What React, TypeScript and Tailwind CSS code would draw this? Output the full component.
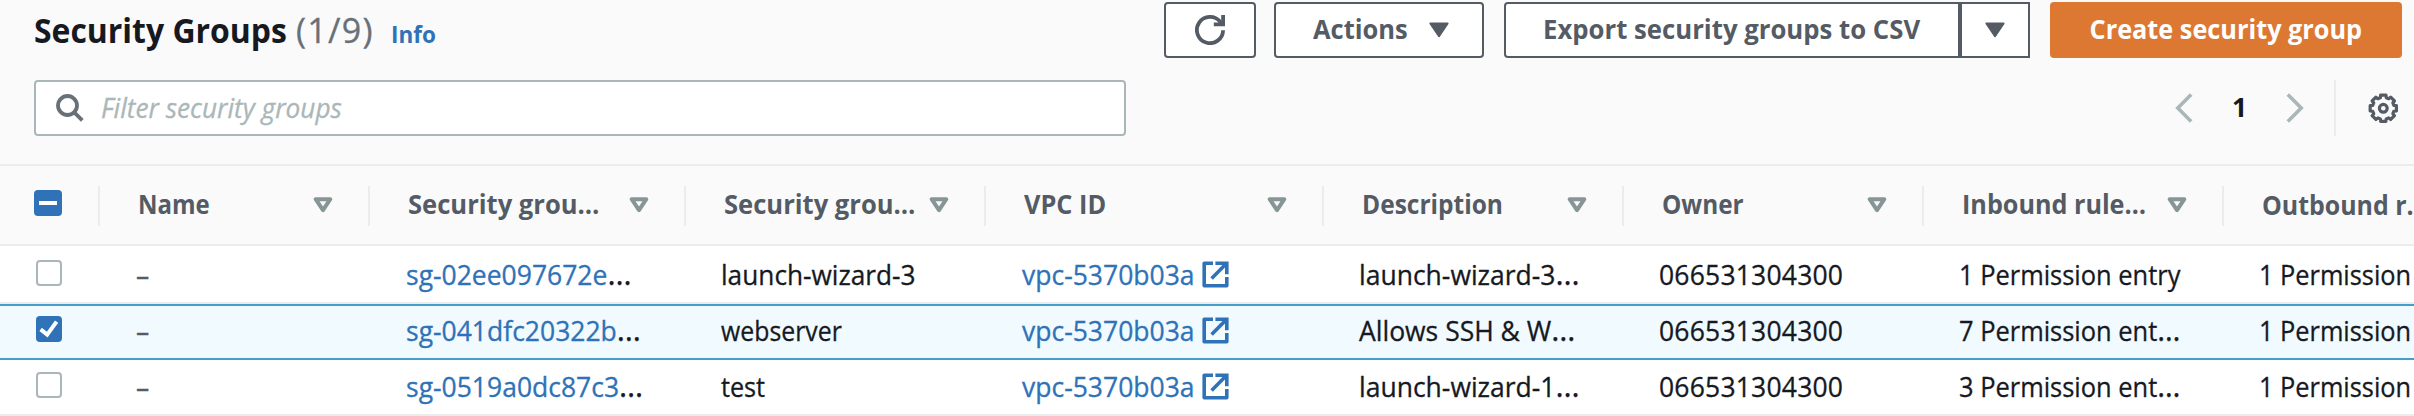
import React from "react";

type IconProps = { className?: string };

const SearchIcon = () => (
  <svg viewBox="0 0 28 28" className="size-7" fill="none" stroke="#687078" strokeWidth="3.8">
    <circle cx="11.5" cy="11.5" r="9.5" />
    <path d="M18 18.2 26.3 26.3" />
  </svg>
);

const RefreshIcon = () => (
  <svg viewBox="0 0 30 30" className="h-[30px] w-[30px]" fill="none" stroke="#545b64" strokeWidth="3.8">
    <path d="M28.1 15.2A13.1 13.1 0 1 1 25.2 6.8L27 9.2" />
    <path d="M28.1 0V9.3H18.8" />
  </svg>
);

const CaretDown = () => (
  <svg viewBox="0 0 20 16" className="h-4 w-5" fill="#545b64" stroke="#545b64" strokeWidth="2" strokeLinejoin="round">
    <path d="M1.4 1.4H18.6L10 14.2Z" />
  </svg>
);

const SortIcon = () => (
  <svg viewBox="0 0 20 16" className="h-4 w-5 shrink-0" fill="none" stroke="#879596" strokeWidth="4" strokeLinejoin="round">
    <path d="M2.7 2.2H17.3L10 13.2Z" />
  </svg>
);

const Chevron = ({ className }: IconProps) => (
  <svg viewBox="0 0 18 30" className={className} fill="none" stroke="#aab7b8" strokeWidth="3.6">
    <path d="M16.2 1.6 2.8 15 16.2 28.4" />
  </svg>
);

const GEAR_TEETH = 8;

function gearPath() {
  const points: string[] = [];
  for (let i = 0; i < GEAR_TEETH; i++) {
    const base = (i * 2 * Math.PI) / GEAR_TEETH - Math.PI / 2;
    const steps: [number, number][] = [
      [-0.2, 13.4],
      [0.2, 13.4],
      [0.27, 11],
      [0.515, 11],
    ];
    for (const [offset, radius] of steps) {
      const x = 15.3 + radius * Math.cos(base + offset);
      const y = 15.3 + radius * Math.sin(base + offset);
      points.push(`${x.toFixed(2)} ${y.toFixed(2)}`);
    }
  }
  return `M${points.join("L")}Z`;
}

const GearIcon = () => (
  <svg viewBox="0 0 31 31" className="h-[31px] w-[31px]" fill="none" stroke="#545b64" strokeWidth="3.2" strokeLinejoin="round">
    <path d={gearPath()} />
    <circle cx="15.3" cy="15.3" r="3.9" />
  </svg>
);

const ExternalIcon = () => (
  <svg viewBox="0 0 27 27" className="h-[27px] w-[27px]" fill="none" stroke="#2f72b7" strokeWidth="3.6" strokeLinejoin="round">
    <path d="M11 2.2H2.2V24.8H24.8V16" />
    <path d="M13.4 2.2H24.8V13.2" strokeLinejoin="miter" />
    <path d="M9.6 17.4 24.4 2.6" />
  </svg>
);

const COLUMNS =
  "grid w-full grid-cols-[100px_270px_316px_300px_338px_300px_300px_300px_190px]";

const HEADERS = [
  { label: "Name", cls: "scale-x-[0.905]" },
  { label: "Security grou…", cls: "scale-x-[0.965]" },
  { label: "Security grou…", cls: "scale-x-[0.965]" },
  { label: "VPC ID", cls: "scale-x-[0.955]" },
  { label: "Description", cls: "scale-x-[0.925]" },
  { label: "Owner", cls: "scale-x-[0.918]" },
  { label: "Inbound rule…", cls: "scale-x-[0.95]" },
];

type Row = {
  id: string;
  name: string;
  nameCls: string;
  description: string;
  inbound: string;
  inboundCut: boolean;
  selected: boolean;
  box: string;
};

const ROWS: Row[] = [
  {
    id: "sg-02ee097672e",
    name: "launch-wizard-3",
    nameCls: "scale-x-[0.99]",
    description: "launch-wizard-3",
    inbound: "1 Permission entry",
    inboundCut: false,
    selected: false,
    box: "h-[58px] border-b-2 border-[#eaeded] bg-white pt-2",
  },
  {
    id: "sg-041dfc20322b",
    name: "webserver",
    nameCls: "scale-x-[0.937]",
    description: "Allows SSH & W",
    inbound: "7 Permission ent",
    inboundCut: true,
    selected: true,
    box: "h-14 border-y-2 border-[#44a0c8] bg-[#f1faff] pt-1",
  },
  {
    id: "sg-0519a0dc87c3",
    name: "test",
    nameCls: "scale-x-[0.95]",
    description: "launch-wizard-1",
    inbound: "3 Permission ent",
    inboundCut: true,
    selected: false,
    box: "h-14 border-b-2 border-[#eaeded] bg-white pt-1.5",
  },
];

const Dots = () => <span className="text-[31px] leading-none text-[#16191f]">…</span>;

const Checkbox = ({ checked }: { checked: boolean }) =>
  checked ? (
    <span className="mt-1.5 ml-9 flex size-[26px] items-center justify-center rounded-[4px] bg-[#2f72b7]">
      <svg viewBox="0 0 26 26" className="size-[26px]" fill="none" stroke="#fff" strokeWidth="4">
        <path d="M4.6 13.4 11.2 18.6 20.6 5.6" />
      </svg>
    </span>
  ) : (
    <span className="mt-1.5 ml-9 block size-[26px] rounded-[4px] border-2 border-[#aab7b8] bg-white" />
  );

const TableRow = ({ row }: { row: Row }) => (
  <div className={`${COLUMNS} ${row.box} text-[26.5px] leading-[42px] whitespace-nowrap [-webkit-text-stroke:0.3px]`}>
    <div>
      <Checkbox checked={row.selected} />
    </div>
    <div className="pl-9 text-[#545b64]">–</div>
    <div className="pl-9">
      <span className="text-[#2f72b7]">{row.id}</span>
      <Dots />
    </div>
    <div className="pl-[35px]">
      <span className={`inline-block origin-left ${row.nameCls}`}>{row.name}</span>
    </div>
    <div className="flex gap-[7px] pl-9 text-[#2f72b7]">
      <span>vpc-5370b03a</span>
      <span className="pt-[7px]">
        <ExternalIcon />
      </span>
    </div>
    <div className="pl-[35px]">
      {row.description}
      <Dots />
    </div>
    <div className="pl-[35px] tracking-[0.2px]">066531304300</div>
    <div className="pl-[35px]">
      <span className="inline-block origin-left scale-x-[0.96]">
        {row.inbound}
        {row.inboundCut && <Dots />}
      </span>
    </div>
    <div className="pl-[35px]">
      <span className="inline-block origin-left scale-x-[0.956]">1 Permission</span>
    </div>
  </div>
);

const BUTTON = "flex h-14 items-center border-2 border-[#545b64] bg-white text-[#545b64]";

export default function App() {
  return (
    <div className="flex h-[416px] w-full flex-col overflow-hidden bg-[#fafafa] font-['Open_Sans',sans-serif] text-[#16191f]">
      <header className="flex h-[80px] items-start justify-between pt-0.5 pr-3 pl-[34px]">
        <div className="flex items-baseline leading-14 whitespace-nowrap">
          <h1 className="w-[262px] origin-left scale-x-[0.953] text-[33.5px] font-bold">Security Groups</h1>
          <span className="w-[95px] text-[34px] tracking-[1.3px] text-[#687078] [-webkit-text-stroke:0.3px]">(1/9)</span>
          <a className="text-[22.5px] font-bold text-[#2f72b7]">Info</a>
        </div>
        <div className="flex text-[26.5px] font-bold whitespace-nowrap">
          <button className={`${BUTTON} w-[92px] justify-center rounded-[4px]`}>
            <RefreshIcon />
          </button>
          <button className={`${BUTTON} ml-[18px] w-[210px] justify-between rounded-[4px] pr-[33px] pl-[37px]`}>
            <span className="origin-left scale-x-[0.962]">Actions</span>
            <CaretDown />
          </button>
          <button className={`${BUTTON} ml-5 w-[456px] rounded-l-[4px] pl-[37px]`}>
            <span className="origin-left scale-x-[0.971]">Export security groups to CSV</span>
          </button>
          <button className={`${BUTTON} w-[70px] justify-center`}>
            <CaretDown />
          </button>
          <button className="ml-5 flex h-14 w-[352px] items-center justify-center rounded-[4px] bg-[#dd7833] text-white">
            <span className="scale-x-[0.954]">Create security group</span>
          </button>
        </div>
      </header>

      <div className="flex h-[84px] items-start justify-between pr-[15px] pl-[34px]">
        <label className="flex h-14 w-[1092px] items-center gap-[17px] rounded-[4px] border-2 border-[#aab7b8] bg-white pl-5">
          <SearchIcon />
          <span className="origin-left scale-x-[0.99] pt-px text-[26.5px] text-[#aab7b8] italic [-webkit-text-stroke:0.3px]">
            Filter security groups
          </span>
        </label>
        <div className="flex h-14 items-center">
          <Chevron className="h-[30px] w-[18px]" />
          <span className="w-[93px] text-center text-[26.5px] font-bold">1</span>
          <Chevron className="h-[30px] w-[18px] rotate-180" />
          <span className="ml-[30px] h-14 w-0.5 bg-[#eaeded]" />
          <span className="ml-8">
            <GearIcon />
          </span>
        </div>
      </div>

      <div className="h-[82px] shrink-0 border-y-2 border-[#eaeded] pt-5">
        <div className={`${COLUMNS} h-10 text-[26.5px] font-bold whitespace-nowrap text-[#545b64]`}>
          <div className="border-r-2 border-[#eaeded] pt-1 pl-[34px]">
            <span className="flex h-[26px] w-7 items-center justify-center rounded-[4px] bg-[#2f72b7]">
              <span className="h-1 w-[18px] bg-white" />
            </span>
          </div>
          {HEADERS.map((header, index) => (
            <div key={index} className="flex justify-between border-r-2 border-[#eaeded] pr-[35px] pl-[38px]">
              <span className={`origin-left leading-[37px] ${header.cls}`}>{header.label}</span>
              <span className="pt-[11px]">
                <SortIcon />
              </span>
            </div>
          ))}
          <div className="pl-[38px]">
            <span className="inline-block origin-left scale-x-[0.94] leading-[37px]">Outbound r…</span>
          </div>
        </div>
      </div>

      <div className="shrink-0">
        {ROWS.map((row) => (
          <TableRow key={row.id} row={row} />
        ))}
      </div>
    </div>
  );
}
